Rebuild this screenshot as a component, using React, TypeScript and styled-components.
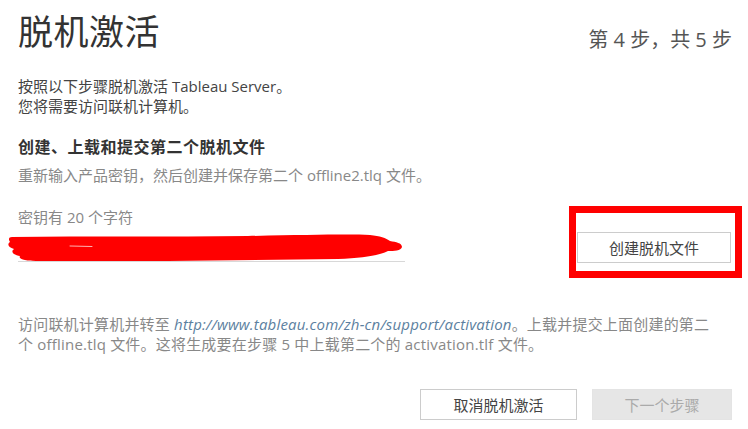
import React from 'react'
import styled, { createGlobalStyle } from 'styled-components'

const GlobalStyle = createGlobalStyle`
  html, body {
    margin: 0;
    padding: 0;
    background: #ffffff;
  }
  body {
    font-family: 'Open Sans', 'Noto Sans CJK SC', sans-serif;
    color: #444444;
  }
`

const Page = styled.div`
  width: 748px;
  height: 429px;
  box-sizing: border-box;
  padding: 0 16px 0 18px;
  display: flex;
  flex-direction: column;
  overflow: hidden;
`

const Header = styled.div`
  display: flex;
  justify-content: space-between;
  align-items: flex-end;
  margin-top: 9px;
`

const Title = styled.h1`
  margin: 0;
  font-size: 35px;
  line-height: 46px;
  font-weight: 400;
  color: #333333;
  letter-spacing: 0.5px;
`

const StepCount = styled.div`
  font-size: 20px;
  line-height: 26px;
  color: #555555;
  margin-bottom: 2px;
`

const Intro = styled.p`
  margin: 21px 0 0;
  font-size: 15px;
  line-height: 20px;
  color: #444444;
`

const Section = styled.h2`
  margin: 20px 0 0;
  font-size: 16px;
  line-height: 22px;
  font-weight: 700;
  color: #333333;
  letter-spacing: 0.5px;
`

const Hint = styled.p<{ $top?: number }>`
  margin: ${p => p.$top ?? 7}px 0 0;
  font-size: 15px;
  line-height: 20px;
  color: #888888;
`

const KeyRow = styled.div`
  display: flex;
  justify-content: space-between;
  align-items: flex-end;
  padding-right: 1px;
`

const KeyColumn = styled.div`
  display: flex;
  flex-direction: column;
  width: 387px;
`

const KeyField = styled.div`
  position: relative;
  flex: none;
  height: 28px;
  margin-top: 6px;
  border-bottom: 1px solid #d8d8d8;
`

const Scribble = styled.svg`
  position: absolute;
  left: -10px;
  top: 0;
  width: 400px;
  height: 30px;
  display: block;
  overflow: visible;
`

const ButtonFrame = styled.div`
  position: relative;
  margin-bottom: -1px;
`

const Highlight = styled.div`
  position: absolute;
  left: -8px;
  top: -26px;
  right: -11px;
  bottom: -15px;
  border: 7px solid #ff0000;
  pointer-events: none;
`

const Button = styled.button<{ $disabled?: boolean }>`
  box-sizing: border-box;
  height: 31px;
  padding: 0;
  font-family: inherit;
  font-size: 15px;
  cursor: pointer;
  border: 1px solid ${p => (p.$disabled ? '#e4e4e4' : '#cccccc')};
  background: ${p => (p.$disabled ? '#e6e6e6' : '#ffffff')};
  color: ${p => (p.$disabled ? '#aaaaaa' : '#444444')};
`

const CreateButton = styled(Button)`
  width: 154px;
`

const Note = styled.p`
  margin: 52px 0 0;
  font-size: 15px;
  line-height: 20px;
  color: #888888;
  letter-spacing: 0.2px;
`

const Link = styled.a`
  font-style: italic;
  color: #5c7fa0;
  text-decoration: none;
`

const Footer = styled.div`
  display: flex;
  justify-content: flex-end;
  gap: 15px;
  margin-top: 35px;
`

const CancelButton = styled(Button)`
  width: 157px;
`

const NextButton = styled(Button)`
  width: 140px;
`

export default function App() {
  return (
    <>
      <GlobalStyle />
      <Page>
        <Header>
          <Title>脱机激活</Title>
          <StepCount>第 4 步，共 5 步</StepCount>
        </Header>
        <Intro>
          按照以下步骤脱机激活 Tableau Server。
          <br />
          您将需要访问联机计算机。
        </Intro>
        <Section>创建、上载和提交第二个脱机文件</Section>
        <Hint>重新输入产品密钥，然后创建并保存第二个 offline2.tlq 文件。</Hint>
        <KeyRow>
          <KeyColumn>
            <Hint $top={22}>密钥有 20 个字符</Hint>
            <KeyField>
              <Scribble viewBox="0 0 400 30">
                <path
                  fill="#ff0000"
                  d="M4 4 C80 3 160 4 240 3 C300 2 340 1 362 2 C372 3 378 5 382 8 C388 9 394 10 394 14 C393 18 386 18 380 18 C372 22 356 25 330 26 C280 27 220 27 160 28 C110 28 60 28 28 28 C16 28 10 26 12 23 C6 22 2 19 6 16 C0 14 -1 11 2 9 C0 6 1 4 4 4 Z"
                />
                <path d="M62 13 L84 13.5" stroke="#ffffff" strokeWidth="1" strokeLinecap="round" opacity="0.7" />
              </Scribble>
            </KeyField>
          </KeyColumn>
          <ButtonFrame>
            <CreateButton>创建脱机文件</CreateButton>
            <Highlight />
          </ButtonFrame>
        </KeyRow>
        <Note>
          访问联机计算机并转至 <Link>http://www.tableau.com/zh-cn/support/activation</Link>。上载并提交上面创建的第二
          <br />
          个 offline.tlq 文件。这将生成要在步骤 5 中上载第二个的 activation.tlf 文件。
        </Note>
        <Footer>
          <CancelButton>取消脱机激活</CancelButton>
          <NextButton $disabled>下一个步骤</NextButton>
        </Footer>
      </Page>
    </>
  )
}
